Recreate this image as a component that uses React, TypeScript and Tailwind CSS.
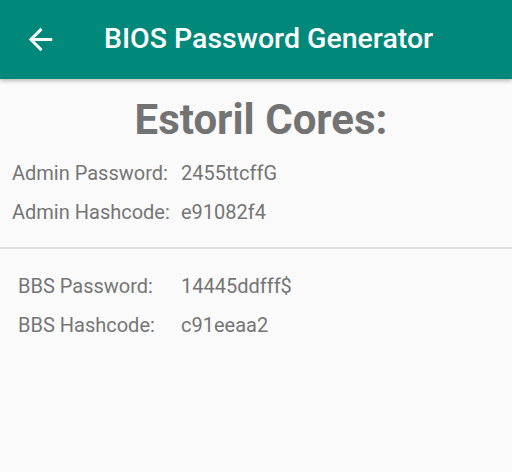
export default function App() {
  const admin = [
    ["Admin Password:", "2455ttcffG"],
    ["Admin Hashcode:", "e91082f4"],
  ];
  const bbs = [
    ["BBS Password:", "14445ddfff$"],
    ["BBS Hashcode:", "c91eeaa2"],
  ];
  return (
    <div className="w-[512px] h-[472px] bg-[#fafafa] overflow-hidden" style={{ fontFamily: "Roboto, sans-serif" }}>
      {/* App bar */}
      <div className="h-[79px] bg-[#00897b] flex items-center shadow-[0_2px_4px_rgba(0,0,0,0.25)] relative z-10">
        <div className="w-[104px] flex items-center pl-[23px]">
          <svg width="35" height="35" viewBox="0 0 24 24" fill="white">
            <path d="M20 11H7.83l5.59-5.59L12 4l-8 8 8 8 1.41-1.41L7.83 13H20v-2z" />
          </svg>
        </div>
        <h1 className="text-[28.5px] font-medium text-white leading-none">BIOS Password Generator</h1>
      </div>

      {/* Title */}
      <h2 className="text-center text-[42px] font-bold text-[#737373] leading-none pt-[20px] pl-[10px]">Estoril Cores:</h2>

      {/* Admin */}
      <div className="mt-[22px] pl-[12px] flex flex-col gap-[19px] text-[20px] text-[#757575] leading-none">
        {admin.map(([k, v]) => (
          <div key={k} className="flex">
            <span className="w-[169px]">{k}</span>
            <span>{v}</span>
          </div>
        ))}
      </div>

      <div className="mt-[25px] h-[2px] bg-[#e0e0e0]" />

      {/* BBS */}
      <div className="mt-[27px] pl-[18px] flex flex-col gap-[19px] text-[20px] text-[#757575] leading-none">
        {bbs.map(([k, v]) => (
          <div key={k} className="flex">
            <span className="w-[163px]">{k}</span>
            <span>{v}</span>
          </div>
        ))}
      </div>
    </div>
  );
}
